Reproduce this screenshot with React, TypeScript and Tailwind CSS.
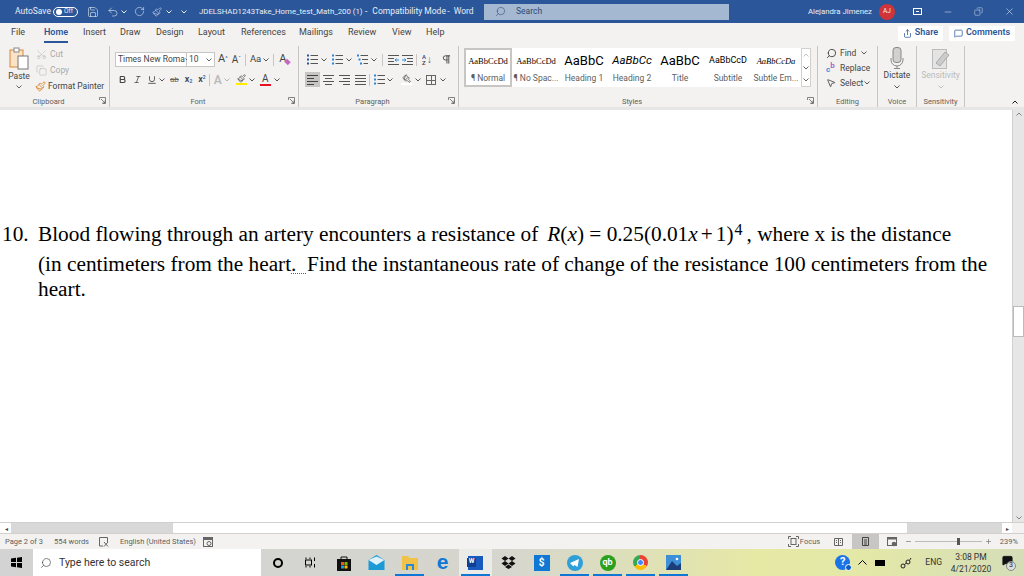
import { Bold, Copy, Italic, MousePointer2, Paintbrush, Pilcrow, Save, Scissors, Search, Share, MessageSquare, Undo2, RotateCw, X, Minus, Plus, Underline } from 'lucide-react'
import type { ReactNode } from 'react'

const Chev = ({ className = 'text-[#555]' }: { className?: string }) => (
  <svg width="6" height="4" viewBox="0 0 6 4" className={`shrink-0 ${className}`}>
    <path d="M0.5 0.5 L3 3 L5.5 0.5" fill="none" stroke="currentColor" strokeWidth="0.9" />
  </svg>
)

const Launcher = () => (
  <svg width="7" height="7" viewBox="0 0 7 7" className="text-[#666]">
    <path d="M0.5 3 V0.5 H6.5 V6.5 H3.5 M2 2 L6 6 M6 3.5 V6 H3.5" fill="none" stroke="currentColor" strokeWidth="0.8" />
  </svg>
)

const Sep = ({ className }: { className: string }) => <div className={`${className} h-[12px] w-px bg-[#c8c6c4] shrink-0`} />

const Lines = ({ rows, color = '#555' }: { rows: number[][]; color?: string }) => (
  <svg width="11" height="10" viewBox="0 0 11 10">
    {rows.map(([a, b], i) => (
      <line key={i} x1={a} x2={b} y1={0.5 + 3 * i} y2={0.5 + 3 * i} stroke={color} strokeWidth="1" />
    ))}
  </svg>
)

const BulletList = ({ dots, sub }: { dots: string; sub?: boolean }) => (
  <svg width="11" height="11" viewBox="0 0 11 11" className="shrink-0">
    {[1.5, 5.5, 9.5].map((y, i) => (
      <g key={y}>
        <rect x={sub ? i * 1.5 : 0} y={y - 1} width="2" height="2" fill={dots} />
        <line x1={sub ? 3.5 + i * 1.5 : 3.5} x2="11" y1={y} y2={y} stroke="#555" />
      </g>
    ))}
  </svg>
)

const IndentIcon = ({ flip }: { flip?: boolean }) => (
  <svg width="11" height="10" viewBox="0 0 11 10" className={`shrink-0 ${flip ? '-scale-x-100' : ''}`}>
    <path d="M0 0.5 H11 M5 3.5 H11 M5 6.5 H11 M0 9.5 H11" stroke="#555" />
    <path d="M0 5 H4 M2.5 3.5 L4 5 L2.5 6.5" fill="none" stroke="#2b88d8" />
  </svg>
)

const Group = ({ width, label, launcher, children }: { width: string; label: string; launcher?: boolean; children: ReactNode }) => (
  <div className={`${width} shrink-0 h-full flex flex-col border-r border-[#c8c6c4]`}>
    <div className="flex-1 min-h-0">{children}</div>
    <div className={`h-[12px] pt-px flex items-center relative text-[7.5px] text-[#605e5c] justify-center ${launcher ? 'pr-[12px]' : ''}`}>
      {label}
      {launcher && (
        <div className="absolute right-[3px] top-[2px]">
          <Launcher />
        </div>
      )}
    </div>
  </div>
)

const StyleItem = ({ sample, label, className, selected }: { sample: string; label: string; className: string; selected?: boolean }) => (
  <div className={`w-[48px] shrink-0 h-full flex flex-col items-center overflow-hidden ${selected ? 'outline-2 -outline-offset-2 outline-[#c8c6c4]' : ''}`}>
    <div className={`h-[26px] flex items-center whitespace-nowrap text-black ${className}`}>{sample}</div>
    <div className="text-[8.5px] leading-[8px] text-[#605e5c] whitespace-nowrap">{label}</div>
  </div>
)

const TaskSlot = ({ children, active, running }: { children: ReactNode; active?: boolean; running?: boolean }) => (
  <div className={`w-[33px] h-full shrink-0 flex items-center justify-center relative ${active ? 'bg-white/50' : ''}`}>
    {children}
    {running && <div className="absolute bottom-0 left-[2px] right-[2px] h-[2px] bg-[#0f78d4]" />}
  </div>
)

const TitleBar = () => (
  <div className="h-[23px] bg-[#2b579a] flex items-center text-[#e8eef7] text-[8.5px] shrink-0">
    <div className="w-[484px] shrink-0 flex items-center">
      <span className="ml-[15px] w-[38px] whitespace-nowrap">AutoSave</span>
      <div className="w-[25px] h-[10px] rounded-full border border-white flex items-center px-[2px] gap-[2px] text-[6.5px]">
        <div className="w-[6px] h-[6px] rounded-full bg-white" />
        Off
      </div>
      <Save size={12} strokeWidth={1.2} className="ml-[9px]" />
      <Undo2 size={12} strokeWidth={1.2} className="ml-[8px]" />
      <Chev className="ml-[2px] text-white" />
      <RotateCw size={11} strokeWidth={1.2} className="ml-[7px]" />
      <Paintbrush size={10} strokeWidth={1.2} className="ml-[7px]" />
      <Chev className="ml-[4px] text-white" />
      <Chev className="ml-[9px] text-white" />
      <span className="ml-[12px] w-[161px] text-[7.8px] whitespace-nowrap">JDELSHAD1243Take_Home_test_Math_200 (1)</span>
      <span className="ml-[5px]">-</span>
      <span className="ml-[5px] w-[71px] whitespace-nowrap">Compatibility Mode</span>
      <span className="ml-[4px]">-</span>
      <span className="ml-[4px]">Word</span>
    </div>
    <div className="w-[245px] shrink-0 h-[16px] bg-[#a5b8d1] flex items-center text-[#2b4a78]">
      <Search size={11} strokeWidth={1.2} className="ml-[11px] -scale-x-100" />
      <span className="ml-[10px]">Search</span>
    </div>
    <div className="flex-1 flex items-center justify-end">
      <span className="whitespace-nowrap text-[7.8px]">Alejandra Jimenez</span>
      <div className="ml-[7px] w-[16px] h-[16px] rounded-full bg-[#d13438] flex items-center justify-center text-[6.5px]">AJ</div>
      <div className="ml-[18px] w-[9px] h-[7px] border border-white flex items-center justify-center">
        <div className="w-[3px] h-px bg-white" />
      </div>
      <Minus size={10} strokeWidth={1.2} className="ml-[21px]" />
      <Copy size={9} strokeWidth={1.2} className="ml-[21px] -scale-x-100" />
      <X size={11} strokeWidth={1.2} className="ml-[21px] mr-[9px]" />
    </div>
  </div>
)

const TabRow = () => {
  const tabs = [
    ['File', 'w-[44px] pl-[11px]'],
    ['Home', 'w-[39px]'],
    ['Insert', 'w-[37px]'],
    ['Draw', 'w-[36px]'],
    ['Design', 'w-[42px]'],
    ['Layout', 'w-[43px]'],
    ['References', 'w-[58px]'],
    ['Mailings', 'w-[49px]'],
    ['Review', 'w-[44px]'],
    ['View', 'w-[34px]'],
    ['Help', 'w-[30px]'],
  ]
  return (
    <div className="h-[20px] bg-[#f3f2f1] flex items-center text-[9px] text-[#444] shrink-0">
      {tabs.map(([t, w]) => (
        <div key={t} className={`${w} shrink-0 h-full flex items-center`}>
          <div className={`h-full flex items-center relative ${t === 'Home' ? 'font-semibold text-[#2b579a]' : ''}`}>
            {t}
            {t === 'Home' && <div className="absolute bottom-0 left-0 right-0 h-[2px] bg-[#2b579a]" />}
          </div>
        </div>
      ))}
      <div className="ml-auto h-[15px] w-[45px] bg-white flex items-center justify-center gap-[3px] text-[#2b579a] font-semibold">
        <Share size={9} /> Share
      </div>
      <div className="ml-[6px] mr-[9px] h-[15px] w-[66px] bg-white flex items-center justify-center gap-[3px] text-[#2b579a] font-semibold">
        <MessageSquare size={9} /> Comments
      </div>
    </div>
  )
}

const ClipboardGroup = () => (
  <div className="flex h-full">
    <div className="w-[34px] flex flex-col items-center ml-[2px] pt-[1px]">
      <svg width="20" height="23" viewBox="0 0 20 23">
        <rect x="1" y="3" width="13" height="17" fill="#fbe3c8" stroke="#d98a35" />
        <rect x="5" y="1" width="5" height="4" fill="#fff" stroke="#888" />
        <rect x="9" y="9" width="10" height="13" fill="#fff" stroke="#777" />
      </svg>
      <span className="text-[8.5px] text-[#444]">Paste</span>
      <Chev className="mt-[2px] text-[#555]" />
    </div>
    <div className="flex flex-col text-[8.5px] gap-[3px] pt-[2px]">
      <div className="h-[13px] flex items-center gap-[3px] text-[#aaa]">
        <Scissors size={11} strokeWidth={1} className="-rotate-90" /> Cut
      </div>
      <div className="h-[13px] flex items-center gap-[3px] text-[#aaa]">
        <Copy size={11} strokeWidth={1} /> Copy
      </div>
      <div className="h-[13px] flex items-center gap-[2px] -ml-[1px] text-[#444] whitespace-nowrap">
        <Paintbrush size={11} className="text-[#d98a35]" /> Format Painter
      </div>
    </div>
  </div>
)

const FontGroup = () => (
  <div className="pt-[6px] pl-[5px] flex flex-col gap-[5px]">
    <div className="flex items-center h-[15px] text-[8.5px] text-[#444]">
      <div className="w-[72px] h-full bg-white border border-[#c8c6c4] flex items-center justify-between px-[2px] whitespace-nowrap">
        <span>Times New Roma</span>
        <Chev />
      </div>
      <div className="w-[28px] h-full bg-white border border-l-0 border-[#c8c6c4] flex items-center justify-between px-[2px]">
        10
        <Chev />
      </div>
      <span className="ml-[3px] text-[11px]">A</span>
      <span className="text-[6px] -mt-[5px] text-[#2b579a]">^</span>
      <span className="ml-[4px] text-[10px]">A</span>
      <span className="text-[6px] -mt-[5px] text-[#2b579a]">ˇ</span>
      <Sep className="ml-[4px]" />
      <span className="ml-[4px] text-[9.5px]">Aa</span>
      <Chev className="ml-[2px]" />
      <Sep className="ml-[4px]" />
      <span className="ml-[5px] text-[11px]">A</span>
      <div className="w-[5px] h-[4px] bg-[#c268c8] rotate-45 -ml-[1px] mt-[5px]" />
    </div>
    <div className="flex items-center h-[15px] text-[#444]">
      <Bold size={9} strokeWidth={3} className="ml-[3px]" />
      <Italic size={9} className="ml-[6px]" />
      <Underline size={10} className="ml-[5px]" />
      <Chev className="ml-[2px]" />
      <span className="ml-[5px] text-[8px] line-through text-[#666]">ab</span>
      <span className="ml-[6px] text-[9px] font-semibold">x<sub className="text-[5px] text-[#2b579a]">2</sub></span>
      <span className="ml-[6px] text-[9px] font-semibold">x<sup className="text-[5px] text-[#2b579a]">2</sup></span>
      <Sep className="ml-[3px]" />
      <span className="ml-[4px] text-[12px] text-[#bbb] font-semibold">A</span>
      <Chev className="ml-[2px] text-[#aaa]" />
      <div className="ml-[6px] flex flex-col items-center">
        <Paintbrush size={9} className="text-[#555]" />
        <div className="w-[11px] h-[2px] bg-[#ffeb00]" />
      </div>
      <Chev className="ml-[2px]" />
      <div className="ml-[5px] flex flex-col items-center leading-none">
        <span className="text-[10px] leading-[10px]">A</span>
        <div className="w-[11px] h-[2px] bg-[#e81123]" />
      </div>
      <Chev className="ml-[3px]" />
    </div>
  </div>
)

const ParagraphGroup = () => (
  <div className="pt-[6px] pl-[8px] flex flex-col gap-[5px] text-[#444]">
    <div className="flex items-center h-[15px]">
      <BulletList dots="#2b579a" />
      <Chev className="ml-[3px]" />
      <div className="ml-[5px]"><BulletList dots="#2b88d8" /></div>
      <Chev className="ml-[3px]" />
      <div className="ml-[5px]"><BulletList dots="#2b88d8" sub /></div>
      <Chev className="ml-[3px]" />
      <Sep className="ml-[5px]" />
      <div className="ml-[5px]"><IndentIcon flip /></div>
      <div className="ml-[3px]"><IndentIcon /></div>
      <Sep className="ml-[3px]" />
      <div className="ml-[5px] flex flex-col text-[6px] leading-[6px] font-semibold text-[#2b579a]"><span>A</span><span className="text-[#444]">Z</span></div>
      <span className="ml-[1px] text-[10px] text-[#555]">↓</span>
      <Pilcrow size={11} className="ml-[9px]" />
    </div>
    <div className="flex items-center h-[15px]">
      <div className="w-[15px] h-[15px] bg-[#c8c6c4] flex items-center justify-center -ml-[2px]">
        <Lines rows={[[0, 11], [0, 7], [0, 11], [0, 7]]} color="#444" />
      </div>
      <div className="ml-px w-[15px] flex justify-center"><Lines rows={[[0, 11], [2, 9], [0, 11], [2, 9]]} /></div>
      <div className="ml-px w-[15px] flex justify-center"><Lines rows={[[0, 11], [4, 11], [0, 11], [4, 11]]} /></div>
      <div className="ml-px w-[15px] flex justify-center"><Lines rows={[[0, 11], [0, 11], [0, 11], [0, 11]]} /></div>
      <Sep className="ml-px" />
      <div className="ml-[4px]"><BulletList dots="#2b88d8" /></div>
      <Chev className="ml-[2px]" />
      <div className="ml-[8px] flex flex-col items-center">
        <Paintbrush size={9} className="text-[#555] rotate-90" />
        <div className="w-[11px] h-[2px] bg-white" />
      </div>
      <Chev className="ml-[3px]" />
      <div className="ml-[5px] w-[10px] h-[10px] border border-[#666] relative">
        <div className="absolute left-[4px] top-0 bottom-0 w-px bg-[#666]" />
        <div className="absolute top-[4px] left-0 right-0 h-px bg-[#666]" />
      </div>
      <Chev className="ml-[4px]" />
    </div>
  </div>
)

const StylesGroup = () => (
  <div className="pt-[2px] pl-[5px] flex">
    <div className="w-[337px] h-[39px] bg-white flex">
      <StyleItem sample="AaBbCcDd" label="¶ Normal" selected className="font-['Liberation_Serif',serif] text-[8.5px]" />
      <StyleItem sample="AaBbCcDd" label="¶ No Spac..." className="font-['Liberation_Serif',serif] text-[8.5px]" />
      <StyleItem sample="AaBbC" label="Heading 1" className="text-[13px]" />
      <StyleItem sample="AaBbCc" label="Heading 2" className="text-[11.5px] italic" />
      <StyleItem sample="AaBbC" label="Title" className="text-[13px]" />
      <StyleItem sample="AaBbCcD" label="Subtitle" className="text-[9px] text-[#555]" />
      <StyleItem sample="AaBbCcDa" label="Subtle Em..." className="font-['Liberation_Serif',serif] text-[8.5px] italic text-[#666]" />
    </div>
    <div className="w-[10px] h-[39px] bg-white border border-[#d2d0ce] flex flex-col items-center justify-between py-[4px]">
      <Chev className="rotate-180 text-[#bbb]" />
      <Chev />
      <Chev />
    </div>
  </div>
)

const EditingGroup = () => (
  <div className="pl-[8px] flex flex-col gap-[1px] text-[8.5px] text-[#444]">
    <div className="h-[14px] flex items-center">
      <div className="w-[14px] shrink-0"><Search size={11} className="-scale-x-100" /></div>
      Find <Chev className="ml-[5px]" />
    </div>
    <div className="h-[14px] flex items-center">
      <div className="w-[14px] shrink-0 flex text-[8px] font-semibold leading-none">
        <span className="text-[#2b88d8] mt-[3px]">c</span>
        <span className="text-[#a45cc8] -mt-[1px]">b</span>
      </div>
      Replace
    </div>
    <div className="h-[14px] flex items-center">
      <div className="w-[14px] shrink-0"><MousePointer2 size={10} /></div>
      Select <Chev className="ml-[1px]" />
    </div>
  </div>
)

const IconGroup = ({ children, label, muted }: { children: ReactNode; label: string; muted?: boolean }) => (
  <div className={`flex flex-col items-center text-[8.5px] ${muted ? 'text-[#bbb]' : 'text-[#444]'}`}>
    <div className="h-[23px] flex items-center">{children}</div>
    <span>{label}</span>
    <Chev className={`mt-[3px] ${muted ? 'text-[#bbb]' : ''}`} />
  </div>
)

const Ribbon = () => (
  <div className="h-[64px] bg-[#f3f2f1] flex items-stretch pt-[3px] shrink-0">
    <Group width="w-[110px]" label="Clipboard" launcher><ClipboardGroup /></Group>
    <Group width="w-[189px]" label="Font" launcher><FontGroup /></Group>
    <Group width="w-[160px]" label="Paragraph" launcher><ParagraphGroup /></Group>
    <Group width="w-[359px]" label="Styles" launcher><StylesGroup /></Group>
    <Group width="w-[60px]" label="Editing"><EditingGroup /></Group>
    <Group width="w-[39px]" label="Voice">
      <IconGroup label="Dictate">
        <svg width="14" height="22" viewBox="0 0 14 22">
          <rect x="3" y="0.5" width="8" height="15" rx="3" fill="#d2d0ce" stroke="#8a8886" />
          <path d="M1 11 V13 A6 6 0 0 0 13 13 V11 M7 19 V21 M4 21.5 H10" fill="none" stroke="#8a8886" />
        </svg>
      </IconGroup>
    </Group>
    <Group width="w-[48px]" label="Sensitivity">
      <IconGroup label="Sensitivity" muted>
        <svg width="18" height="22" viewBox="0 0 18 22">
          <rect x="0.5" y="2.5" width="14" height="19" fill="#e4e4e4" stroke="#bbb" />
          <path d="M4 16 L13 5 L17 8 L8 19 Z" fill="#ccc" stroke="#aaa" />
        </svg>
      </IconGroup>
    </Group>
    <div className="flex-1 flex items-end justify-end pr-[6px]">
      <Chev className="rotate-180 mb-[3px]" />
    </div>
  </div>
)

const Document = () => (
  <div className="flex-1 min-h-0 flex bg-white border-t-[3px] border-[#e6e6e6]">
    <div className="flex-1 pt-[109px] font-['Liberation_Serif',serif] text-[21.3px] text-black flex">
      <div className="w-[38px] pl-[2px] leading-[30px]">10.</div>
      <div className="whitespace-nowrap">
        <div className="h-[30px] leading-[30px] flex">
          <span>Blood flowing through an artery encounters a resistance of</span>
          <span className="ml-[9px]"><i>R</i>(<i>x</i>) = 0.25(0.01<i>x</i><span className="mx-[3px]">+</span>1)</span>
          <span className="text-[16px] leading-[16px] ml-[1px] mt-[3px]">4</span>
          <span className="ml-[4px]">, where x is the distance</span>
        </div>
        <div className="h-[25px] leading-[30px]">
          (in centimeters from the heart<span className="underline decoration-dotted decoration-[#3b5bdb] decoration-1 underline-offset-2 whitespace-pre">.  </span>Find the instantaneous rate of change of the resistance 100 centimeters from the
        </div>
        <div className="leading-[30px]">heart.</div>
      </div>
    </div>
    <div className="w-[12px] shrink-0 bg-[#e6e6e6] flex flex-col items-center border-l border-[#d2d0ce]">
      <Chev className="mt-[2px] rotate-180 text-[#777]" />
      <div className="mt-[190px] w-full h-[31px] bg-white border border-[#bbb]" />
      <div className="flex-1" />
      <Chev className="mb-[2px] text-[#777]" />
    </div>
  </div>
)

const HScroll = () => (
  <div className="h-[12px] bg-white border-t border-[#d2d0ce] border-b flex items-stretch pl-[2px] shrink-0">
    <div className="w-[9px] bg-white flex items-center justify-center text-[6px] text-[#444]">◂</div>
    <div className="w-[162px] bg-[#d8d8d8]" />
    <div className="flex-1 bg-white" />
    <div className="w-[95px] bg-[#d8d8d8]" />
    <div className="w-[10px] bg-white flex items-center justify-center text-[6px] text-[#444]">▸</div>
    <div className="w-[12px] bg-[#f3f2f1]" />
  </div>
)

const StatusBar = () => (
  <div className="h-[15px] bg-[#f3f2f1] flex items-center text-[7.5px] text-[#605e5c] shrink-0">
    <span className="ml-[5px] w-[32px] whitespace-nowrap">Page 2 of 3</span>
    <span className="ml-[17px] w-[32px] whitespace-nowrap">554 words</span>
    <svg width="10" height="10" viewBox="0 0 10 10" className="ml-[13px]">
      <path d="M8.5 5 V0.5 H0.5 V9 H4 M5 5 L9 9.5 M9 5 L5 9.5" fill="none" stroke="#666" />
    </svg>
    <span className="ml-[11px] w-[69px] whitespace-nowrap">English (United States)</span>
    <svg width="10" height="10" viewBox="0 0 10 10" className="ml-[14px]">
      <rect x="0.5" y="0.5" width="9" height="9" fill="none" stroke="#666" />
      <rect x="0.5" y="0.5" width="9" height="2.5" fill="#666" />
      <circle cx="6" cy="6.5" r="2" fill="none" stroke="#666" />
    </svg>
    <svg width="11" height="11" viewBox="0 0 11 11" className="ml-auto">
      <path d="M0.5 3 V0.5 H3 M8 0.5 H10.5 V3 M0.5 8 V10.5 H3 M8 10.5 H10.5 V8" fill="none" stroke="#666" />
      <rect x="3" y="2.5" width="5" height="6" fill="none" stroke="#666" />
    </svg>
    <span className="ml-px w-[18px]">Focus</span>
    <svg width="9" height="8" viewBox="0 0 9 8" className="ml-[16px]">
      <path d="M0.5 0.5 H8.5 V7.5 H0.5 Z M4.5 0.5 V7.5 M2 2.5 H3 M2 4.5 H3 M6 2.5 H7 M6 4.5 H7" fill="none" stroke="#666" />
    </svg>
    <div className="ml-[9px] w-[27px] h-full bg-[#c8c6c4] flex items-center justify-center">
      <svg width="7" height="9" viewBox="0 0 7 9"><path d="M0.5 0.5 H6.5 V8.5 H0.5 Z M2 3 H5 M2 5 H5 M2 7 H5" fill="none" stroke="#444" /></svg>
    </div>
    <svg width="10" height="10" viewBox="0 0 10 10" className="ml-[8px]">
      <rect x="0.5" y="0.5" width="9" height="8" fill="none" stroke="#666" />
      <rect x="0.5" y="0.5" width="9" height="2" fill="#666" />
      <circle cx="7" cy="7" r="2.3" fill="#666" />
    </svg>
    <Minus size={7} className="ml-[8px]" />
    <div className="ml-[3px] w-[67px] h-px bg-[#bbb] relative">
      <div className="absolute left-[42px] -top-[3px] w-[3px] h-[7px] bg-[#555]" />
    </div>
    <Plus size={7} className="ml-[3px]" />
    <span className="ml-[8px] mr-[6px]">239%</span>
  </div>
)

const Taskbar = () => (
  <div className="h-[27px] flex items-stretch bg-[linear-gradient(90deg,#d3d3d3_0%,#d6d6ce_50%,#e6e9a4_74%,#e3e8a8_85%,#d5ddb8_100%)] shrink-0">
    <div className="w-[33px] flex items-center justify-center">
      <svg width="11" height="11" viewBox="0 0 11 11">
        <path d="M0 1.5 L5 0.8 V5 H0 Z M6 0.7 L11 0 V5 H6 Z M0 6 H5 V10.2 L0 9.5 Z M6 6 H11 V11 L6 10.3 Z" fill="#000" />
      </svg>
    </div>
    <div className="w-[228px] bg-white flex items-center text-[10.5px] text-[#333]">
      <Search size={12} strokeWidth={1.2} className="ml-[7px] -scale-x-100" />
      <span className="ml-[7px]">Type here to search</span>
    </div>
    <TaskSlot><div className="w-[10px] h-[10px] rounded-full border-[2px] border-black" /></TaskSlot>
    <TaskSlot>
      <svg width="11" height="11" viewBox="0 0 11 11"><path d="M1 0.5 V2 M5 0.5 V2 M1 9 V10.5 M5 9 V10.5 M9.5 0.5 V4 M9.5 7 V10.5" stroke="#000" /><rect x="0.5" y="3" width="6" height="5" fill="none" stroke="#000" /></svg>
    </TaskSlot>
    <TaskSlot>
      <svg width="16" height="16" viewBox="0 0 16 16">
        <rect x="1" y="4" width="14" height="12" fill="#111" />
        <path d="M5 5 V2 H11 V5" fill="none" stroke="#111" />
        <rect x="5" y="7" width="3" height="3" fill="#f25022" /><rect x="8.5" y="7" width="3" height="3" fill="#7fba00" /><rect x="5" y="10.5" width="3" height="3" fill="#00a4ef" /><rect x="8.5" y="10.5" width="3" height="3" fill="#ffb900" />
      </svg>
    </TaskSlot>
    <TaskSlot>
      <svg width="17" height="15" viewBox="0 0 17 15"><path d="M0.5 5 L8.5 0 L16.5 5 V15 H0.5 Z" fill="#1c9ad6" /><path d="M0.5 5 L8.5 10 L16.5 5 L8.5 1.5 Z" fill="#dff1fb" /></svg>
    </TaskSlot>
    <TaskSlot running>
      <svg width="16" height="14" viewBox="0 0 16 14"><path d="M0 0 H6 L7.5 2 H16 V14 H0 Z" fill="#f0c24a" /><rect x="4" y="8" width="8" height="6" fill="#2b88d8" /><rect x="6" y="10" width="4" height="4" fill="#f0c24a" /></svg>
    </TaskSlot>
    <TaskSlot>
      <span className="text-[21px] leading-none font-bold text-[#0f78d4] font-['Liberation_Sans',sans-serif] -mt-[3px]">e</span>
    </TaskSlot>
    <TaskSlot active running>
      <div className="w-[15px] h-[14px] bg-[#185abd] relative">
        <div className="absolute left-[-1px] top-[2px] w-[9px] h-[9px] bg-[#103f91] text-white text-[6.5px] font-bold flex items-center justify-center">W</div>
      </div>
    </TaskSlot>
    <TaskSlot>
      <svg width="15" height="13" viewBox="0 0 15 13" fill="#111"><path d="M4 0 L7.5 2.5 L4 5 L0.5 2.5 Z M11 0 L14.5 2.5 L11 5 L7.5 2.5 Z M4 5 L7.5 7.5 L4 10 L0.5 7.5 Z M11 5 L14.5 7.5 L11 10 L7.5 7.5 Z M7.5 8.5 L11 11 L7.5 13 L4 11 Z" /></svg>
    </TaskSlot>
    <TaskSlot>
      <div className="w-[16px] h-[16px] bg-[#0f78d4] text-white text-[10px] font-bold flex items-center justify-center">$</div>
    </TaskSlot>
    <TaskSlot running>
      <svg width="16" height="16" viewBox="0 0 16 16"><circle cx="8" cy="8" r="8" fill="#2f9fd8" /><path d="M3 8 L12 4 L10.5 12 L7.5 10 L6.5 11.5 Z" fill="#fff" /></svg>
    </TaskSlot>
    <TaskSlot running>
      <div className="w-[16px] h-[16px] rounded-full bg-[#2ca01c] text-white text-[9px] font-bold flex items-center justify-center">qb</div>
    </TaskSlot>
    <TaskSlot running>
      <div className="w-[15px] h-[15px] rounded-full bg-[conic-gradient(#ea4335_0_33%,#fbbc05_33%_66%,#34a853_66%_100%)] flex items-center justify-center">
        <div className="w-[7px] h-[7px] rounded-full bg-[#4285f4] border border-white" />
      </div>
    </TaskSlot>
    <TaskSlot running>
      <svg width="15" height="15" viewBox="0 0 15 15"><rect width="15" height="15" fill="#3d8fd8" /><path d="M0 15 L6 6 L11 11 L15 8 V15 Z" fill="#1c3f7a" /><circle cx="11" cy="4" r="1.3" fill="#fff" /></svg>
    </TaskSlot>
    <div className="flex-1" />
    <div className="w-[15px] h-[15px] self-center rounded-full bg-[#1a73e8] text-white text-[11px] font-bold flex items-center justify-center relative">
      ?
      <div className="absolute -right-[2px] -bottom-[1px] w-[7px] h-[7px] rounded-full bg-[#0f5cc0] border border-white" />
    </div>
    <svg width="9" height="5" viewBox="0 0 9 5" className="self-center ml-[8px]"><path d="M0.5 4.5 L4.5 0.5 L8.5 4.5" fill="none" stroke="#000" /></svg>
    <div className="self-center ml-[8px] w-[10px] h-[6px] bg-black" />
    <svg width="12" height="12" viewBox="0 0 12 12" className="self-center ml-[15px]"><circle cx="3" cy="9" r="2" fill="none" stroke="#222" /><circle cx="8" cy="5" r="2" fill="none" stroke="#222" /><path d="M4.5 7.5 L6.5 6 M9.5 3.5 L11 1" stroke="#222" /></svg>
    <span className="self-center ml-[13px] text-[8.5px] text-[#333]">ENG</span>
    <div className="ml-[9px] w-[40px] flex flex-col items-center justify-center text-[8.5px] leading-[12px] text-[#333] whitespace-nowrap">
      <span>3:08 PM</span>
      <span>4/21/2020</span>
    </div>
    <div className="ml-[11px] mr-[10px] self-center relative w-[12px] h-[16px]">
      <MessageSquare size={11} fill="#111" className="text-[#111]" />
      <div className="absolute -right-[2px] bottom-0 w-[10px] h-[10px] rounded-full bg-[#ddd] border border-[#888] text-[7px] leading-none flex items-center justify-center text-[#222]">3</div>
    </div>
  </div>
)

export default function App() {
  return (
    <div className="w-[1024px] h-[576px] overflow-hidden flex flex-col font-['Roboto',sans-serif]">
      <TitleBar />
      <TabRow />
      <Ribbon />
      <Document />
      <HScroll />
      <StatusBar />
      <Taskbar />
    </div>
  )
}
